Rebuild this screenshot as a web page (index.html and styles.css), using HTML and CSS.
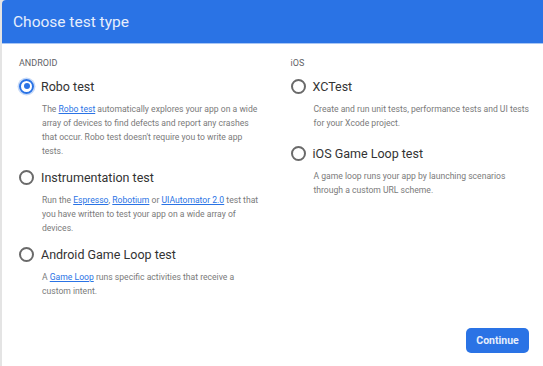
FILE: index.html
```html
<!DOCTYPE html>
<html lang="en">
<head>
    <meta charset="UTF-8">
    <title>Choose test type</title>
    <link rel="stylesheet" href="styles.css">
</head>
<body>

<div class="dialog">
    <!-- Dialog title bar -->
    <div class="dialog-header">Choose test type</div>

    <div class="dialog-body">
        <!-- Android tests -->
        <div class="column">
            <div class="section-label">ANDROID</div>

            <div class="option">
                <label class="option-row">
                    <span class="radio checked"></span>
                    <span class="option-name">Robo test</span>
                </label>
                <p class="option-desc">The <a href="#">Robo test</a> automatically explores your app on a wide array of devices to find defects and report any crashes that occur. Robo test doesn't require you to write app tests.</p>
            </div>

            <div class="option">
                <label class="option-row">
                    <span class="radio"></span>
                    <span class="option-name">Instrumentation test</span>
                </label>
                <p class="option-desc">Run the <a href="#">Espresso</a>, <a href="#">Robotium</a> or <a href="#">UIAutomator 2.0</a> test that you have written to test your app on a wide array of devices.</p>
            </div>

            <div class="option">
                <label class="option-row">
                    <span class="radio"></span>
                    <span class="option-name">Android Game Loop test</span>
                </label>
                <p class="option-desc">A <a href="#">Game Loop</a> runs specific activities that receive a custom intent.</p>
            </div>
        </div>

        <!-- iOS tests -->
        <div class="column column-ios">
            <div class="section-label">iOS</div>

            <div class="option">
                <label class="option-row">
                    <span class="radio"></span>
                    <span class="option-name">XCTest</span>
                </label>
                <p class="option-desc">Create and run unit tests, performance tests and UI tests for your Xcode project.</p>
            </div>

            <div class="option">
                <label class="option-row">
                    <span class="radio"></span>
                    <span class="option-name">iOS Game Loop test</span>
                </label>
                <p class="option-desc">A game loop runs your app by launching scenarios through a custom URL scheme.</p>
            </div>
        </div>
    </div>

    <div class="dialog-footer">
        <button type="button" class="btn-primary">Continue</button>
    </div>
</div>

</body>
</html>
```

FILE: styles.css
```css
/* Page styling */
body {
    margin: 0;
    height: 366px;
    overflow: hidden;
    font-family: Roboto, 'Liberation Sans', sans-serif;
    background-color: #E4E4E4; /* Grey backdrop behind the dialog */
}

/* Dialog container */
.dialog {
    margin-left: 2px;
    width: 560px;
    height: 366px;
    background-color: #FFFFFF;
    border-top-left-radius: 4px;
    display: flex;
    flex-direction: column;
}

/* Title bar */
.dialog-header {
    height: 43px;
    padding-left: 11px;
    display: flex;
    align-items: center;
    background-color: #2A73E5;
    border-top-left-radius: 4px;
    border-bottom: 1px solid #A8C6F4;
    color: #E6EEFC;
    font-size: 15.5px;
}

/* Two columns of options */
.dialog-body {
    display: flex;
    padding: 13px 0 0 17px;
}

.column {
    width: 272px;
}

.section-label {
    height: 12px;
    line-height: 12px;
    margin-bottom: 7px;
    font-size: 9px;
    color: #5F6368;
}

.option + .option {
    margin-top: 9px;
}

.column-ios .option + .option {
    margin-top: 13px;
}

/* Radio row */
.option-row {
    height: 20px;
    display: flex;
    align-items: center;
    gap: 7px;
    cursor: pointer;
}

.radio {
    width: 11px;
    height: 11px;
    flex-shrink: 0;
    border: 2px solid #6A6A6A;
    border-radius: 50%;
    box-sizing: content-box;
}

.radio.checked {
    position: relative;
    border-color: #2A73E5;
    box-shadow: 0 0 0 1.5px #C7DAF8;
}

.radio.checked::after {
    content: "";
    position: absolute;
    left: 2.5px;
    top: 2.5px;
    width: 6px;
    height: 6px;
    border-radius: 50%;
    background-color: #2A73E5;
}

.option-name {
    font-size: 12.5px;
    color: #333333;
}

/* Description under each option */
.option-desc {
    margin: 6px 0 0 23px;
    width: 219px;
    font-size: 8.6px;
    line-height: 14px;
    color: #7A7A7A;
}

.option-desc a {
    color: #2A73E5;
}

/* Footer with the main action */
.dialog-footer {
    margin-top: auto;
    padding: 0 33px 13px 0;
    display: flex;
    justify-content: flex-end;
}

.btn-primary {
    width: 63px;
    height: 25px;
    border: none;
    border-radius: 5px;
    background-color: #2A73E5;
    color: #E6EEFC;
    font-family: inherit;
    font-size: 10.5px;
    font-weight: bold;
    cursor: pointer;
}
```
